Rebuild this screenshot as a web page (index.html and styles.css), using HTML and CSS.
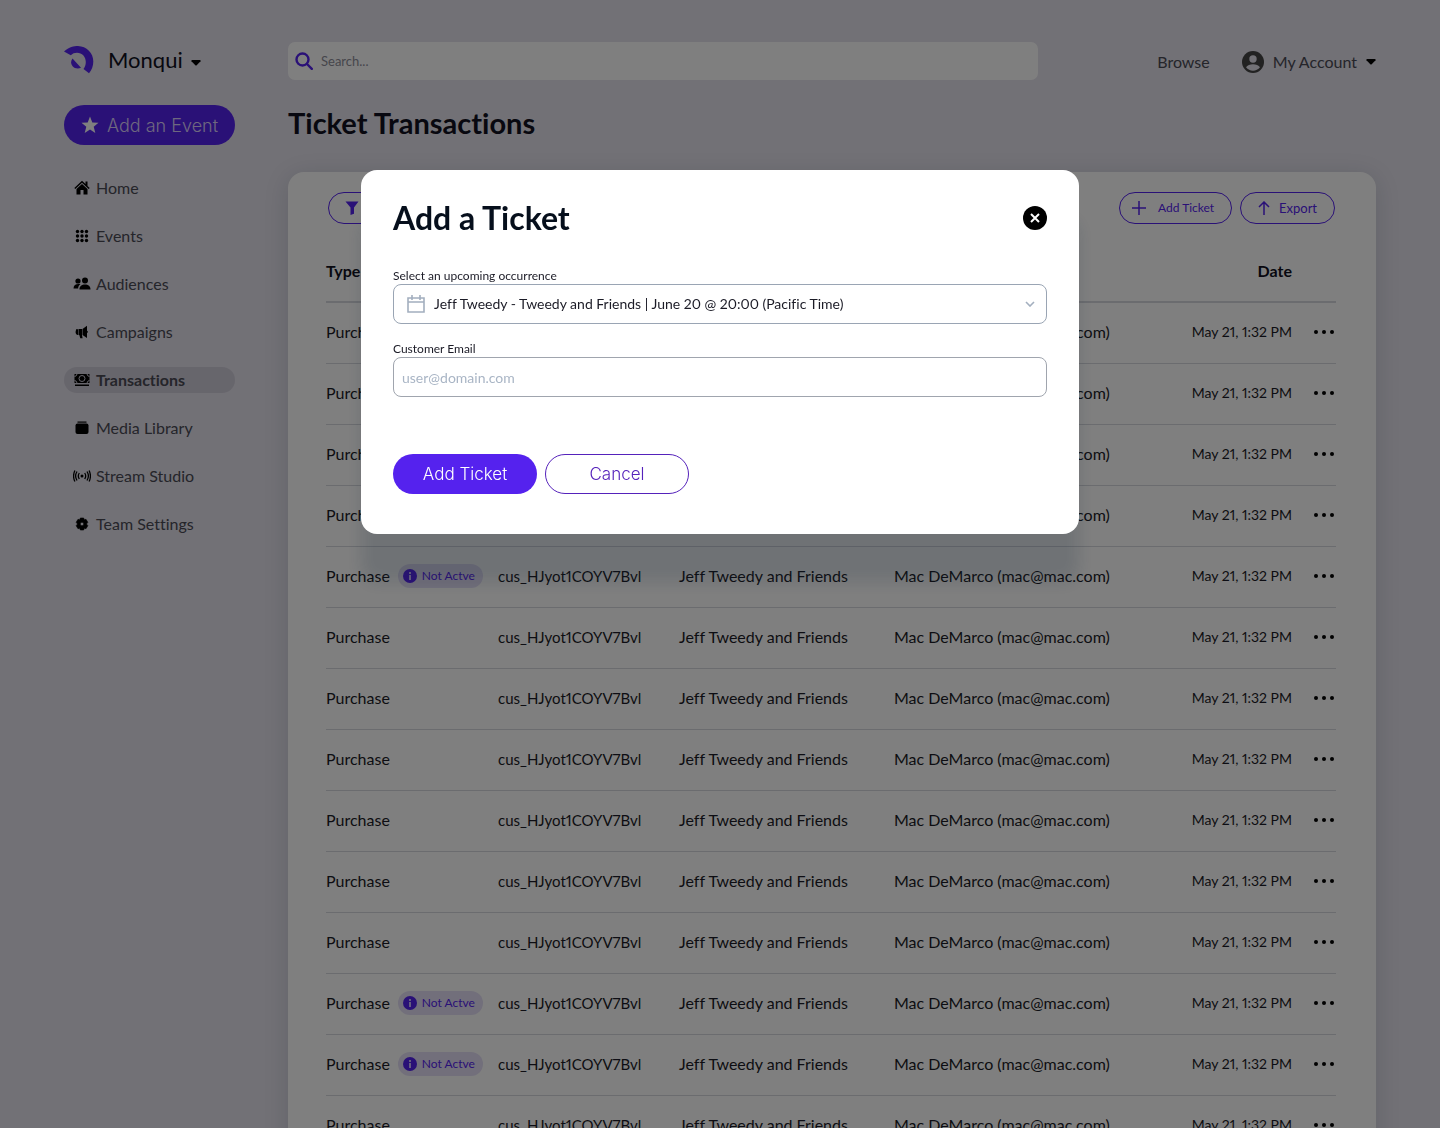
FILE: index.html
```html
<!DOCTYPE html>
<html lang="en">
<head>
<meta charset="utf-8">
<meta name="viewport" content="width=device-width, initial-scale=1">
<title>Ticket Transactions</title>
<link rel="stylesheet" href="styles.css">
</head>
<body>
<div class="app">
  <aside class="sidebar">
    <button class="brand" type="button">
      <svg width="30" height="29" viewBox="0 0 30 29" fill="#5522ee"><path d="M0 5.500C5 .800 10 0 14 0c8.500.300 15.500 7 15.300 15.500 0 4.500-1.600 8.700-4.300 11.800l-5.500-4.200c1.500-2 2.300-4.300 2.300-7 0-5.500-3.800-9.300-8.800-9.300-2.500 0-4.500.800-6.200 2.500z"/><path d="M8.500 12.500 17 21.800c-3.300 1.400-6.500.500-8.400-1.600-2-2.300-2-5.300-.1-7.700z"/></svg>
      <span>Monqui</span>
      <svg class="caret" width="10" height="6" viewBox="0 0 10 6"><path d="M1 0h8q1 .3.500 1.300L5.700 5.300q-.7.600-1.400 0L.5 1.300Q0 .3 1 0z"/></svg>
    </button>
    <button class="add-event" type="button">
      <svg width="18" height="18" viewBox="0 0 18 18" fill="#fff"><path d="m9 .500 2.300 5.900 6.200.400-4.800 4 1.600 6.200L9 13.600 3.700 17l1.600-6.200-4.800-4 6.200-.4z"/></svg>
      <span>Add an Event</span>
    </button>
    <nav class="nav">
      <a href="#home"><svg viewBox="0 0 18 18"><path d="M9 1.800 1.300 9l1 1L9 3.800l6.700 6.200 1-1L14.500 7V2.500h-2v2.600z"/><path d="m9 5-5.500 5v5.500h4V11h3v4.500h4V10z"/></svg>Home</a>
      <a href="#events"><svg viewBox="0 0 18 18"><g id="dot-row"><circle cx="4.500" cy="4.500" r="1.700"/><circle cx="9" cy="4.500" r="1.700"/><circle cx="13.500" cy="4.500" r="1.700"/></g><use href="#dot-row" y="4.500"/><use href="#dot-row" y="9"/></svg>Events</a>
      <a href="#audiences"><svg viewBox="0 0 18 18"><circle cx="5" cy="6" r="2.600"/><circle cx="12" cy="5.500" r="3"/><path d="M6.500 14.500c0-3.300 2.200-5 5.500-5s5.500 1.700 5.500 5zM.5 13.500c0-3.200 2-4.500 5-4.500.8 0 1.500.1 2 .3-1.600 1-2.300 2.400-2.400 4.200z"/></svg>Audiences</a>
      <a href="#campaigns"><svg viewBox="0 0 18 18"><path d="M14 2.800v5c1.200.300 1.200 2 0 2.300v5L9.500 12V6zM5.500 6H9v6.200l.6 3H7.300L6.300 12H5.500zM3 6.200h2V12c-3-.5-2.500-3.500-2-5z"/></svg>Campaigns</a>
      <a href="#transactions" class="active" aria-current="page"><svg viewBox="0 0 18 18"><path d="M1.500 3h15v9h-15z"/><path d="M2 13.500h14V15H2z"/><g fill="none" stroke="#cfccd9"><circle cx="9" cy="7.500" r="3"/><path d="M1.500 5.500q2 0 2.500-2.500M14 3q.5 2.500 2.500 2.500M1.500 9.500Q3.500 9.500 4 12M14 12q.5-2.500 2.500-2.500"/></g></svg>Transactions</a>
      <a href="#media"><svg viewBox="0 0 18 18"><path d="M4.500 2.500h9v1.200h-9z"/><rect x="2.500" y="4.500" width="13" height="10.500" rx="2"/></svg>Media Library</a>
      <a href="#studio"><svg viewBox="0 0 18 18"><circle cx="9" cy="9" r="1.500"/><path d="M6.300 6q-2 3 0 6M11.700 6q2 3 0 6M4 4.500q-2.800 4.500 0 9M14 4.500q2.800 4.500 0 9M1.900 3.500q-2.700 5.500 0 11M16.100 3.500q2.700 5.500 0 11" fill="none" stroke="#000" stroke-width="1.300"/></svg>Stream Studio</a>
      <a href="#team"><svg viewBox="0 0 18 18"><path fill-rule="evenodd" d="M7.300 3h3.400l.5 1.800 1.800-.500 1.800 3L13.500 9l1.300 1.700-1.800 3-1.800-.500-.5 1.800H7.300l-.5-1.800-1.800.500-1.800-3L4.500 9 3.200 7.300l1.800-3 1.800.500zM9 7.200a1.800 1.800 0 1 0 0 3.600 1.800 1.800 0 0 0 0-3.600z" stroke="#000" stroke-linejoin="round" stroke-width=".6"/></svg>Team Settings</a>
    </nav>
  </aside>

  <main class="main">
    <header class="topbar">
      <div class="search">
        <svg width="18" height="18" viewBox="0 0 18 18" fill="none" stroke="#5522ee" stroke-width="2.400" stroke-linecap="round"><circle cx="7.500" cy="7.500" r="6"/><path d="m12 12 4.800 4.800"/></svg>
        <input type="search" aria-label="Search" placeholder="Search...">
      </div>
      <div class="links">
        <a href="#browse">Browse</a>
        <button class="account" type="button">
          <svg width="22" height="22" viewBox="0 0 22 22"><circle cx="11" cy="11" r="11" fill="#444"/><circle cx="11" cy="8" r="3.700" fill="#e4e2ec"/><path d="M4 16.300c2.500-4.200 11.500-4.200 14 0-3.500 4.500-10.500 4.500-14 0z" fill="#e4e2ec"/></svg>
          <span>My Account</span>
          <svg width="10" height="6" viewBox="0 0 10 6"><path d="M1 0h8q1 .3.500 1.300L5.700 5.300q-.7.600-1.400 0L.5 1.300Q0 .3 1 0z"/></svg>
        </button>
      </div>
    </header>
    <h1>Ticket Transactions</h1>
    <section class="card">
      <div class="toolbar">
        <button class="pill filter" type="button" aria-label="Filter"><svg width="14" height="14" viewBox="0 0 14 14" fill="#5522ee"><path d="M.5.500h13L9 6.500v6.300L5.500 14V6.500z"/></svg></button>
        <button class="pill add" type="button"><svg width="14" height="14" viewBox="0 0 14 14" stroke="#5522ee" stroke-width="1.500"><path d="M7 0v14M0 7h14"/></svg>Add Ticket</button>
        <button class="pill export" type="button"><svg width="12" height="14" viewBox="0 0 12 14" fill="none" stroke="#5522ee" stroke-width="1.500"><path d="M6 14V1M1 6l5-5 5 5"/></svg>Export</button>
      </div>
      <table>
        <colgroup><col class="c-type"><col class="c-id"><col class="c-event"><col><col class="c-date"><col class="c-more"></colgroup>
        <thead><tr><th>Type</th><th aria-label="ID"></th><th aria-label="Event"></th><th aria-label="Customer"></th><th class="date">Date</th><th aria-label="Actions"></th></tr></thead>
        <tbody id="rows"></tbody>
      </table>
    </section>
  </main>
</div>

<div class="backdrop">
  <form class="modal" role="dialog" aria-modal="true" aria-labelledby="modal-title">
    <div class="modal-head">
      <h2 id="modal-title">Add a Ticket</h2>
      <button class="close" type="button" aria-label="Close"><svg width="24" height="24" viewBox="0 0 24 24"><circle cx="12" cy="12" r="12"/><path d="m8 8 8 8m0-8-8 8" stroke="#fff" stroke-width="2"/></svg></button>
    </div>
    <label for="occurrence">Select an upcoming occurrence</label>
    <div class="select">
      <svg width="18" height="18" viewBox="0 0 18 18" fill="none" stroke="#a3afbf" stroke-width="1.600"><path d="M1 3h16v14H1zM1 7h16M5 0v5M13 0v5"/></svg>
      <select id="occurrence"><option>Jeff Tweedy - Tweedy and Friends | June 20 @ 20:00 (Pacific Time)</option></select>
      <svg width="10" height="6" viewBox="0 0 10 6" fill="none" stroke="#a3afbf" stroke-width="1.600"><path d="m1 1 4 4 4-4"/></svg>
    </div>
    <label for="email">Customer Email</label>
    <input class="email" id="email" type="email" placeholder="user@domain.com">
    <div class="actions">
      <button class="primary" type="submit">Add Ticket</button>
      <button class="secondary" type="button">Cancel</button>
    </div>
  </form>
</div>
<script src="script.js"></script>
</body>
</html>
```
FILE: script.js
```js
const inactiveRows = [4, 11, 12];
const badge = '<span class="badge"><svg width="14" height="14" viewBox="0 0 14 14"><circle cx="7" cy="7" r="7" fill="#5522ee"/><path d="M6 3h2v2H6zm0 3h2v5H6z" fill="#cbbcff"/></svg>Not Actve</span>';
const more = '<button class="more" type="button" aria-label="More actions"><svg width="22" height="6" viewBox="0 0 22 6"><circle cx="2" cy="3" r="2"/><circle cx="10" cy="3" r="2"/><circle cx="18" cy="3" r="2"/></svg></button>';

document.getElementById('rows').innerHTML = Array.from({ length: 14 }, (_, i) => `
  <tr>
    <td><div class="type">Purchase${inactiveRows.includes(i) ? badge : ''}</div></td>
    <td class="customer-id">cus_HJyot1COYV7Bvl</td>
    <td>Jeff Tweedy and Friends</td>
    <td>Mac DeMarco (mac@mac.com)</td>
    <td class="date">May 21, 1:32 PM</td>
    <td>${more}</td>
  </tr>`).join('');
```
FILE: styles.css
```css
* { box-sizing: border-box; }

body {
  margin: 0;
  background: #e4e2ec;
  color: #1b1b26;
  font: 16px/24px Lato, "Open Sans", sans-serif;
  font-variant-ligatures: none;
  font-variant-numeric: proportional-nums;
}

button, input, select { font: inherit; color: inherit; }
button { border: 0; padding: 0; background: none; cursor: pointer; }
a { color: inherit; text-decoration: none; }
svg { flex: none; }

.app {
  display: grid;
  grid-template-columns: 171px minmax(0, 1fr);
  gap: 53px;
  height: 100vh;
  overflow: hidden;
  padding: 42px 64px 0;
}

.sidebar { display: flex; flex-direction: column; align-items: stretch; }

.brand {
  display: flex;
  align-items: center;
  height: 36px;
  font-size: 22px;
  color: #101020;
}
.brand span { margin: 0 8px 0 14px; }
.caret { margin-top: 6px; }

.add-event {
  display: flex;
  align-items: center;
  justify-content: center;
  gap: 8px;
  height: 40px;
  margin-top: 27px;
  border-radius: 20px;
  background: #5522ee;
  color: #ddd0ff;
  font: 300 18px Inter, sans-serif;
}

.nav { display: flex; flex-direction: column; gap: 22px; margin-top: 30px; }
.nav a {
  display: flex;
  align-items: center;
  gap: 5px;
  height: 26px;
  padding-left: 9px;
  border-radius: 13px;
  color: #4a4a55;
}
.nav svg { width: 18px; height: 18px; }
.nav .active { background: #cfccd9; font-weight: 700; }

.topbar { display: flex; align-items: center; justify-content: space-between; gap: 32px; }
.search {
  display: flex;
  align-items: center;
  gap: 6px;
  flex: 0 1 750px;
  height: 38px;
  padding: 0 7px;
  border-radius: 7px;
  background: #fff;
}
.search input { flex: 1; min-width: 0; border: 0; outline: 0; background: none; font-size: 13px; }
.search input::placeholder { color: #8d8d98; }
.links { display: flex; align-items: center; gap: 32px; color: #4a4a55; padding-top: 2px; }
.account { display: flex; align-items: center; gap: 9px; }

h1 { margin: 25px 0 0; font-size: 29px; line-height: 36px; color: #101020; }

.card {
  height: 1100px;
  margin-top: 31px;
  padding: 20px 40px 0 38px;
  border-radius: 16px;
  background: #fff;
  box-shadow: 0 4px 24px #14253f26;
}
.toolbar { display: flex; align-items: center; gap: 8px; padding: 0 1px 0 2px; }
.pill {
  display: flex;
  align-items: center;
  height: 32px;
  border: 1px solid #5522ee;
  border-radius: 16px;
  color: #5522ee;
  font-size: 12px;
}
.filter { width: 96px; padding-left: 16px; margin-right: auto; }
.add { width: 113px; gap: 12px; padding-left: 12px; }
.export { width: 95px; gap: 9px; padding-left: 17px; font-size: 13px; }

table { width: 100%; margin-top: 16px; border-collapse: collapse; table-layout: fixed; }
.c-type { width: 172px; }
.c-id { width: 181px; }
.c-event { width: 215px; }
.c-date { width: 140px; }
.c-more { width: 44px; }
th, td { padding: 0; text-align: left; white-space: nowrap; border-bottom: 1px solid #d6d8de; }
th { height: 62px; border-bottom-width: 2px; color: #101020; font-weight: 700; }
td { height: 61px; padding-bottom: 2px; }
.customer-id { font-size: 15px; }
td.date { font-size: 14px; }
.date { padding-right: 0; text-align: right; }
.type { display: flex; align-items: center; gap: 8px; height: 24px; }
.more { display: flex; margin-left: auto; }
.badge {
  display: flex;
  align-items: center;
  gap: 5px;
  width: 85px;
  height: 24px;
  padding-left: 5px;
  border-radius: 12px;
  background: #e4dff6;
  color: #5522ee;
  font-size: 12px;
}

.backdrop {
  position: fixed;
  inset: 0;
  display: flex;
  align-items: flex-start;
  justify-content: center;
  padding: 170px 24px 24px;
  background: rgba(0, 0, 0, .5);
}
.modal {
  display: flex;
  flex-direction: column;
  width: 100%;
  max-width: 718px;
  padding: 28px 32px 40px;
  border-radius: 16px;
  background: #fff;
  box-shadow: 0 48px 16px rgba(20, 37, 63, .15);
}
.modal-head { display: flex; align-items: center; justify-content: space-between; margin-bottom: 30px; }
h2 { margin: 0; font-size: 32px; line-height: 40px; color: #060f1c; }
.close { display: flex; }
label { font-size: 12px; line-height: 16px; }
.select {
  display: flex;
  align-items: center;
  height: 40px;
  margin-bottom: 17px;
  padding: 0 11px 0 13px;
  border: 1px solid #9aa5b4;
  border-radius: 8px;
}
.select select {
  flex: 1;
  min-width: 0;
  height: 100%;
  padding: 0 9px;
  border: 0;
  outline: 0;
  appearance: none;
  background: none;
  font-size: 14px;
}
.email {
  height: 40px;
  padding: 0 8px;
  border: 1px solid #a0a5ae;
  border-radius: 8px;
  font-size: 14px;
}
.email::placeholder { color: #a9b5c5; }
.actions { display: flex; gap: 8px; margin-top: 57px; }
.actions button {
  width: 144px;
  height: 40px;
  border-radius: 20px;
  font: 300 17px Inter, sans-serif;
}
.primary { background: #5522ee; color: #fff; }
.actions .secondary { border: 1px solid #5522bb; color: #5522bb; }
```
